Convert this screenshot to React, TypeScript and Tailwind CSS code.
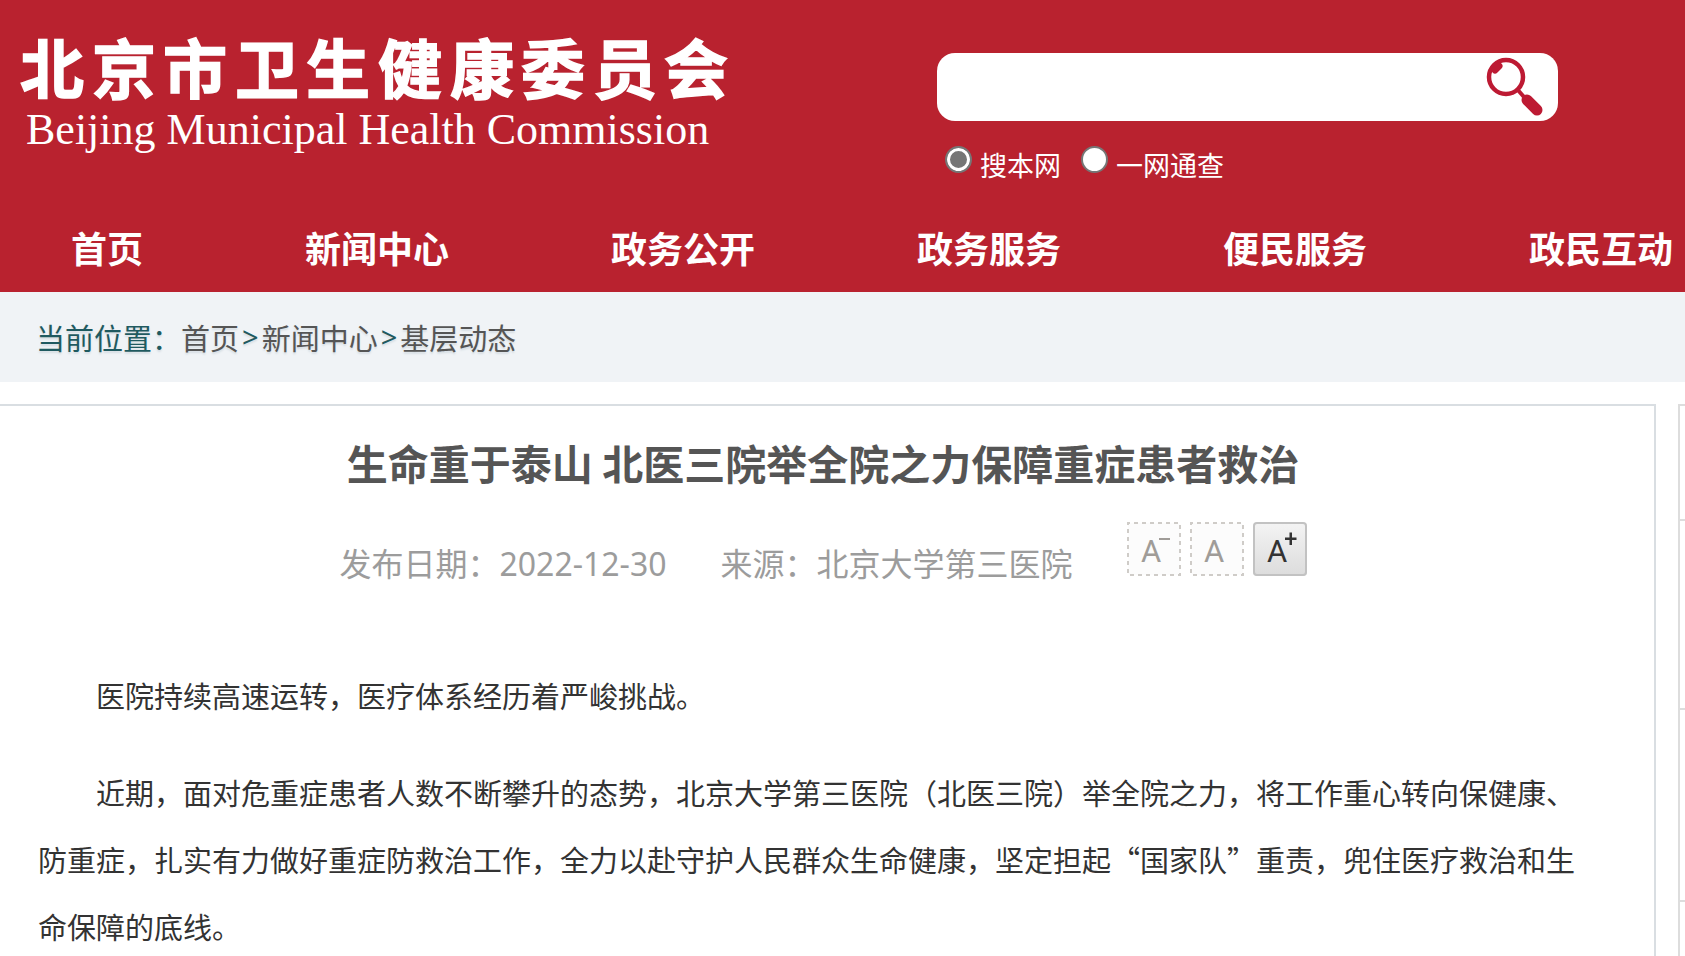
import React, { useState } from 'react';

const NAV_ITEMS = ['首页', '新闻中心', '政务公开', '政务服务', '便民服务', '政民互动'];

const SCOPES = [
  { id: 'site', label: '搜本网' },
  { id: 'all', label: '一网通查' },
];

const CRUMBS = ['首页', '新闻中心', '基层动态'];

const PARAGRAPHS = [
  '医院持续高速运转，医疗体系经历着严峻挑战。',
  '近期，面对危重症患者人数不断攀升的态势，北京大学第三医院（北医三院）举全院之力，将工作重心转向保健康、防重症，扎实有力做好重症防救治工作，全力以赴守护人民群众生命健康，坚定担起“国家队”重责，兜住医疗救治和生命保障的底线。',
];

const Logo: React.FC = () => (
  <svg width="740" height="140" viewBox="0 0 740 140" fill="#fff" role="img" aria-label="北京市卫生健康委员会">
    <text
      x="20 92 163 235 306 378 450 521 593 664"
      y="73"
      fontSize="64"
      fontWeight="700"
      stroke="#fff"
      strokeWidth="1.5"
      fontFamily="'Noto Sans CJK SC', sans-serif"
    >
      北京市卫生健康委员会
    </text>
    <text x="26" y="124" fontSize="44" fontFamily="'Liberation Serif', serif">
      Beijing Municipal Health Commission
    </text>
  </svg>
);

const SearchIcon: React.FC = () => (
  <svg width="60" height="62" viewBox="0 0 60 62" fill="none" stroke="#bd1a33">
    <circle cx="20" cy="21" r="17" strokeWidth="4.5" />
    <path d="M9 14 L13 10" strokeWidth="7" strokeLinecap="round" />
    <path d="M31 33 L38 41" strokeWidth="4" />
    <path d="M41 44 L51 54" strokeWidth="11" strokeLinecap="round" />
  </svg>
);

const SearchForm: React.FC = () => {
  const [scope, setScope] = useState('site');

  return (
    <form className="w-[621px] pt-[53px]" onSubmit={(e) => e.preventDefault()}>
      <div className="flex h-[68px] items-center overflow-hidden rounded-[18px] bg-white">
        <input type="text" aria-label="搜索" className="h-full min-w-0 flex-1 px-4 text-[29px] text-[#333] outline-none" />
        <button type="submit" aria-label="搜索" className="mr-3">
          <SearchIcon />
        </button>
      </div>
      <div className="flex gap-5 pt-[25px] pl-2">
        {SCOPES.map((item) => (
          <div key={item.id} className="flex items-start gap-2">
            <input
              type="radio"
              id={item.id}
              name="scope"
              checked={scope === item.id}
              onChange={() => setScope(item.id)}
              className="size-[27px] appearance-none rounded-full border-2 border-[#767676] bg-white checked:bg-[#767676] checked:shadow-[inset_0_0_0_3px_#fff]"
            />
            <label htmlFor={item.id} className="text-[27px] leading-[38px] text-white">
              {item.label}
            </label>
          </div>
        ))}
      </div>
    </form>
  );
};

const DashedFrame: React.FC = () => (
  <>
    <rect x="1" y="1" width="52" height="52" rx="3" fill="#fcfcfc" />
    <path d="M1 1H53V53H1Z" fill="none" stroke="#cfccc8" strokeWidth="2" strokeDasharray="4 4" strokeDashoffset="2" />
  </>
);

const LetterA: React.FC = () => (
  <text x="14" y="40" fontSize="31" fontFamily="Roboto, sans-serif">
    A
  </text>
);

const FontSizeButtons: React.FC = () => (
  <div className="flex items-start gap-[9px]">
    <button type="button" aria-label="缩小字号" className="text-[#a09c98]">
      <svg width="54" height="54" viewBox="0 0 54 54" fill="currentColor">
        <DashedFrame />
        <LetterA />
        <rect x="32" y="16" width="11" height="2" />
      </svg>
    </button>
    <button type="button" aria-label="默认字号" className="text-[#a09c98]">
      <svg width="54" height="54" viewBox="0 0 54 54" fill="currentColor">
        <DashedFrame />
        <LetterA />
      </svg>
    </button>
    <button
      type="button"
      aria-label="放大字号"
      className="rounded-[4px] bg-linear-to-b from-[#f4f4f4] to-[#dcdcdc] text-[#333] inset-ring-2 inset-ring-[#c2c2c2]"
    >
      <svg width="54" height="54" viewBox="0 0 54 54" fill="currentColor">
        <LetterA />
        <path d="M32 15.500h4.500v-5h2.500v5h4.500v2.500h-4.500v5h-2.500v-5h-4.500z" />
      </svg>
    </button>
  </div>
);

export default function App() {
  return (
    <div className="min-h-screen overflow-hidden bg-white font-['Noto_Sans_CJK_SC',sans-serif]">
      <header className="bg-[#b9222f]">
        <div className="flex h-[207px] justify-between pr-[127px]">
          <div className="pt-5">
            <Logo />
          </div>
          <SearchForm />
        </div>
        <nav className="flex gap-[162px] pb-1 pl-[71px]">
          {NAV_ITEMS.map((item) => (
            <a key={item} href="#" className="shrink-0 text-[36px] leading-[81px] font-bold text-white">
              {item}
            </a>
          ))}
        </nav>
      </header>

      <div className="flex bg-[#f0f3f6] pl-9 text-[29px] leading-[90px] text-[#1f5a60] text-shadow-[0_2px_2px_#d5dde3]">
        <span>当前位置：</span>
        {CRUMBS.map((crumb, i) => (
          <React.Fragment key={crumb}>
            {i > 0 && <span className="px-[3px] font-['Noto_Sans',sans-serif]">&gt;</span>}
            <a href="#" className="text-[#555]">
              {crumb}
            </a>
          </React.Fragment>
        ))}
      </div>

      <div className="flex gap-[22px] pt-[22px]">
        <main className="flex-1 border-t-2 border-r-2 border-[#d9dee2] pt-6">
          <h1 className="pr-2 text-center text-[41px] leading-[64px] font-bold text-[#555]">
            生命重于泰山 北医三院举全院之力保障重症患者救治
          </h1>
          <div className="flex justify-center gap-[54px] pt-7 pr-2 font-['Noto_Sans','Noto_Sans_CJK_SC',sans-serif] text-[32px] leading-[84px] text-[#9c9c9c]">
            <span>发布日期：2022-12-30</span>
            <span>来源：北京大学第三医院</span>
            <FontSizeButtons />
          </div>
          <article className="space-y-[30px] pt-14 pr-14 pl-[38px] text-[29px] leading-[67px] text-[#333]">
            {PARAGRAPHS.map((text) => (
              <p key={text} className="indent-[2em]">
                {text}
              </p>
            ))}
          </article>
        </main>

        <aside className="w-[7px] border-t-2 border-l-2 border-[#ddd]">
          <div className="h-[115px] border-b-2 border-[#ddd]" />
          <div className="h-[189px] border-b-2 border-[#ddd]" />
          <div className="h-[192px] border-b-2 border-[#ddd]" />
        </aside>
      </div>
    </div>
  );
}
